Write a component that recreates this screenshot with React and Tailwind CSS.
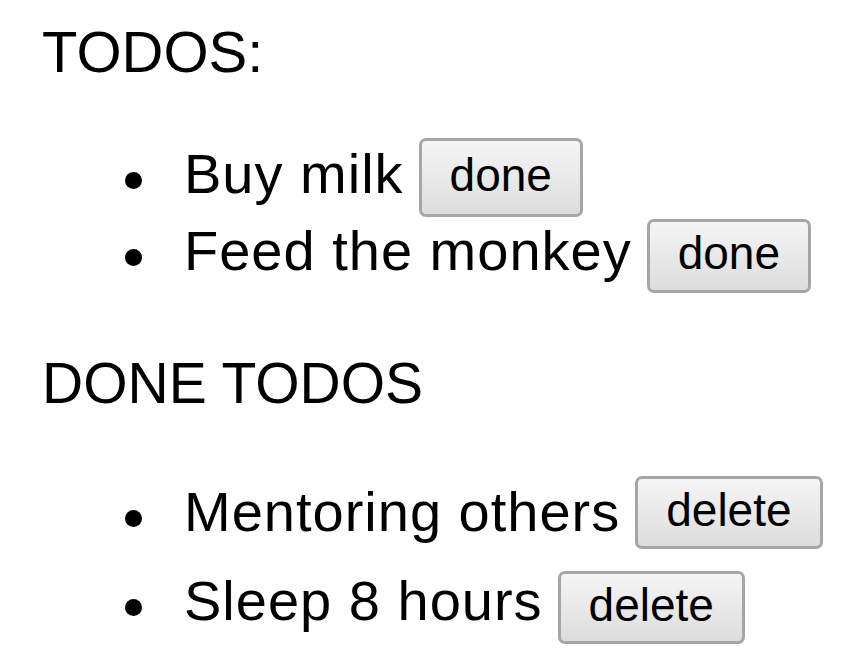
import React from 'react';

const todos = [
  { id: 1, text: 'Buy milk', btnH: 'h-[79px]', textMt: 'mt-[8px]', rowMt: 'mt-0' },
  { id: 2, text: 'Feed the monkey', btnH: 'h-[74px]', textMt: 'mt-[4px]', rowMt: 'mt-[2px]' },
];

const doneTodos = [
  { id: 3, text: 'Mentoring others', btnH: 'h-[73px]', textMt: 'mt-[8px]', rowMt: 'mt-0' },
  { id: 4, text: 'Sleep 8 hours', btnH: 'h-[73px]', textMt: 'mt-[2px]', rowMt: 'mt-[22px]' },
];

function TodoRow({ item, label }) {
  return (
    <li className={`flex items-start ${item.rowMt}`}>
      <span className={`ml-[83px] mr-[42px] w-[17px] h-[17px] rounded-full bg-black shrink-0 ${item.textMt} translate-y-[26px]`} />
      <span className={`text-[56px] leading-[56px] tracking-[1px] whitespace-nowrap ${item.textMt}`}>{item.text}</span>
      <button
        className={`ml-[15px] ${item.btnH} px-[28px] pb-[6px] flex items-center border-[3px] border-[#a6a6a6] rounded-[7px] bg-linear-to-b from-[#f5f5f5] to-[#dddddd] text-[46px] leading-[46px] text-black`}
      >
        {label}
      </button>
    </li>
  );
}

export default function App() {
  return (
    <div className="min-h-[657px] bg-white text-black font-['Liberation_Sans',Arial,sans-serif] pl-[42px] pt-[23px]">
      <div className="text-[58px] leading-[58px]">TODOS:</div>
      <ul className="mt-[57px]">
        {todos.map(t => (
          <TodoRow key={t.id} item={t} label="done" />
        ))}
      </ul>
      <div className="mt-[62px] text-[57px] leading-[57px]">DONE TODOS</div>
      <ul className="mt-[64px]">
        {doneTodos.map(t => (
          <TodoRow key={t.id} item={t} label="delete" />
        ))}
      </ul>
    </div>
  );
}
